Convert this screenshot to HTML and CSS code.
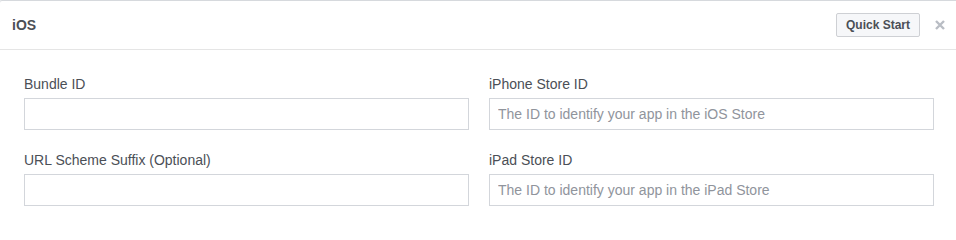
FILE: index.html
```html
<!DOCTYPE html>
<html lang="en">
<head>
<meta charset="utf-8">
<title>iOS</title>
<link rel="stylesheet" href="styles.css">
</head>
<body>
<div class="card">
  <div class="card-header">
    <div class="card-title">iOS</div>
    <button class="btn" type="button">Quick Start</button>
    <span class="close" aria-label="Close">
      <svg width="10" height="10" viewBox="0 0 10 10"><path d="M1 1L9 9M9 1L1 9" stroke="#b9bdc4" stroke-width="2.4" stroke-linecap="butt"/></svg>
    </span>
  </div>
  <div class="form">
    <div class="field">
      <label class="label">Bundle ID</label>
      <input class="input" type="text">
    </div>
    <div class="field">
      <label class="label">iPhone Store ID</label>
      <input class="input" type="text" placeholder="The ID to identify your app in the iOS Store">
    </div>
    <div class="field">
      <label class="label">URL Scheme Suffix (Optional)</label>
      <input class="input" type="text">
    </div>
    <div class="field">
      <label class="label">iPad Store ID</label>
      <input class="input" type="text" placeholder="The ID to identify your app in the iPad Store">
    </div>
  </div>
</div>
</body>
</html>
```
FILE: styles.css
```css
html, body {
  margin: 0;
  padding: 0;
  background: #ffffff;
  overflow: hidden;
}
body {
  height: 222px;
  font-family: "Liberation Sans", Arial, Helvetica, sans-serif;
  color: #4b4f56;
}
.card {
  width: 960px;
  height: 222px;
  margin-left: -1px;
  box-sizing: border-box;
  border: 1px solid #dddfe2;
  border-bottom: 0;
  border-top-color: #d6d9dd;
  border-radius: 3px 3px 0 0;
  background: #ffffff;
}
.card-header {
  display: flex;
  align-items: center;
  height: 48px;
  padding: 0 13px 0 12px;
  border-bottom: 1px solid #e5e5e5;
}
.card-title {
  flex: 1;
  font-size: 14px;
  font-weight: bold;
  color: #4b4f56;
}
.btn {
  height: 24px;
  box-sizing: border-box;
  padding: 0 9px;
  border: 1px solid #ced0d4;
  border-radius: 2px;
  background: #f6f7f9;
  color: #4b4f56;
  font-family: "Liberation Sans", Arial, Helvetica, sans-serif;
  font-size: 12px;
  font-weight: bold;
  line-height: 22px;
}
.close {
  display: flex;
  width: 10px;
  height: 10px;
  margin-left: 15px;
}
.form {
  display: grid;
  grid-template-columns: 1fr 1fr;
  column-gap: 20px;
  row-gap: 22px;
  padding: 26px 24px 0 24px;
}
.field {
  display: flex;
  flex-direction: column;
}
.label {
  font-size: 14px;
  line-height: 16px;
  color: #4b4f56;
  margin-bottom: 6px;
}
.input {
  height: 32px;
  box-sizing: border-box;
  margin: 0;
  padding: 0 8px;
  border: 1px solid #d3d6db;
  border-radius: 0;
  font-family: "Liberation Sans", Arial, Helvetica, sans-serif;
  font-size: 14px;
  color: #1d2129;
  background: #ffffff;
  outline: none;
}
.input::placeholder {
  color: #90949c;
  opacity: 1;
}
```
